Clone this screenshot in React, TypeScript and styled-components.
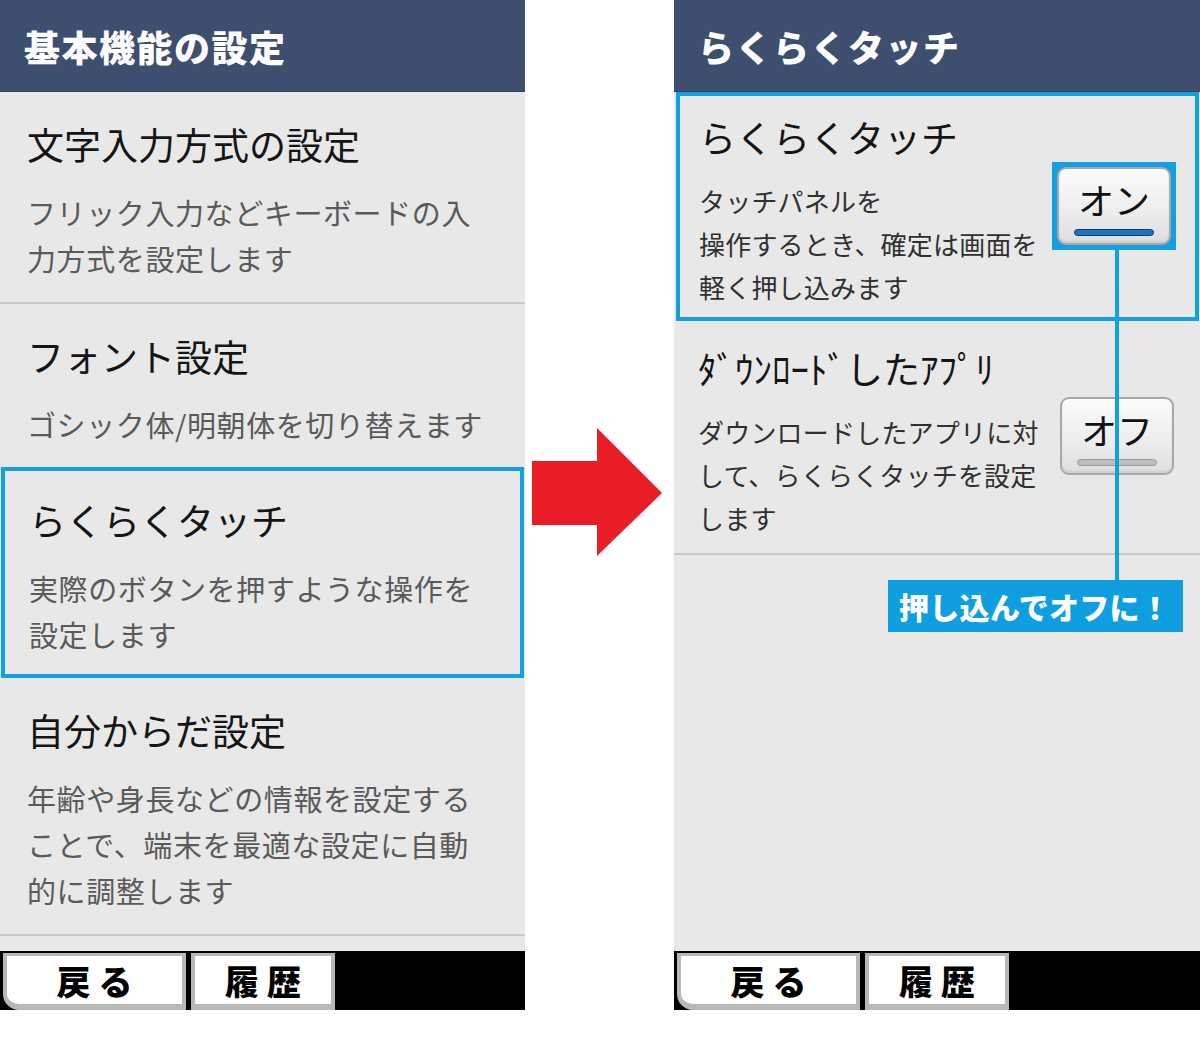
import React from 'react';
import styled, { createGlobalStyle } from 'styled-components';

const GlobalStyle = createGlobalStyle`
  html, body {
    margin: 0;
    padding: 0;
    background: #ffffff;
  }
  * {
    box-sizing: border-box;
  }
  body {
    font-family: "Noto Sans CJK JP", "Noto Sans", sans-serif;
  }
`;

const Page = styled.div`
  width: 1200px;
  height: 1051px;
  display: flex;
  align-items: flex-start;
  background: #ffffff;
`;

const Panel = styled.section<{ $width: number }>`
  position: relative;
  width: ${(p) => p.$width}px;
  height: 1010px;
  display: flex;
  flex-direction: column;
  background: #e8e8e8;
`;

const Header = styled.header`
  height: 92px;
  flex-shrink: 0;
  display: flex;
  align-items: center;
  padding-left: 24px;
  background: #3d4e6f;
  border-bottom: 1px solid #34425f;
  color: #ffffff;
  font-size: 36px;
  font-weight: 900;
  letter-spacing: 1.5px;
`;

const List = styled.div`
  flex: 1;
  display: flex;
  flex-direction: column;
`;

const LeftItem = styled.div<{ $active?: boolean }>`
  padding: ${(p) => (p.$active ? '24px 20px 17px 24px' : '27px 20px 21px 27px')};
  border: ${(p) => (p.$active ? '4px solid #12a0e2' : 'none')};
  border-bottom: ${(p) => (p.$active ? '4px solid #12a0e2' : '2px solid #c9c9c9')};
  margin: ${(p) => (p.$active ? '-3px 1px 0 1px' : '0')};
`;

const Title = styled.div`
  font-size: 37px;
  line-height: 50px;
  color: #151515;
  white-space: nowrap;
`;

const LeftDesc = styled.div`
  margin-top: 20px;
  font-size: 29px;
  line-height: 46px;
  letter-spacing: 0.6px;
  color: #5a5a5a;
  white-space: nowrap;
`;

const RightItem = styled.div<{ $active?: boolean }>`
  padding: ${(p) => (p.$active ? '16px 19px 9px 19px' : '22px 26px 14px 24px')};
  border: ${(p) => (p.$active ? '4px solid #12a0e2' : 'none')};
  border-bottom: ${(p) => (p.$active ? '4px solid #12a0e2' : '2px solid #c9c9c9')};
  margin: ${(p) => (p.$active ? '0 1px 0 2px' : '0')};
`;

const Row = styled.div`
  margin-top: 17px;
  display: flex;
  align-items: flex-start;
  justify-content: space-between;
`;

const RightDesc = styled.div`
  font-size: 26px;
  line-height: 43px;
  letter-spacing: 0.2px;
  color: #303030;
  white-space: nowrap;
`;

const Highlight = styled.div`
  margin-top: -17px;
  padding: 1px;
  border: 4px solid #12a0e2;
  background: #12a0e2;
`;

const ToggleWrap = styled.div`
  margin-top: -13px;
`;

const Toggle = styled.div`
  width: 114px;
  height: 78px;
  display: flex;
  flex-direction: column;
  align-items: center;
  padding-top: 9px;
  border: 2px solid #a8a8a8;
  border-radius: 9px;
  background: linear-gradient(#fbfbfb, #ececec 60%, #dedede);
  box-shadow: inset 0 -2px 2px rgba(0, 0, 0, 0.08);
`;

const ToggleLabel = styled.span`
  font-size: 36px;
  line-height: 42px;
  color: #111111;
`;

const ToggleBar = styled.span<{ $on?: boolean }>`
  margin-top: 9px;
  width: 80px;
  height: 7px;
  border-radius: 4px;
  background: ${(p) => (p.$on ? '#1c74c0' : '#bdbdbd')};
  border: 1px solid ${(p) => (p.$on ? '#0c3d70' : '#9b9b9b')};
`;

const BottomBar = styled.nav`
  height: 59px;
  flex-shrink: 0;
  display: flex;
  gap: 5px;
  padding: 2px 0 0 3px;
  background: #000000;
`;

const BarButton = styled.div<{ $width: number; $rounded?: boolean }>`
  width: ${(p) => p.$width}px;
  height: 57px;
  display: flex;
  align-items: center;
  justify-content: center;
  background: #ffffff;
  border: 4px solid #b8b8b8;
  border-top-width: 3px;
  border-bottom-width: 6px;
  border-bottom-left-radius: ${(p) => (p.$rounded ? '16px' : '0')};
  font-size: 34px;
  font-weight: 900;
  letter-spacing: 8px;
  padding-left: 8px;
  color: #000000;
`;

const ArrowColumn = styled.div`
  width: 149px;
  flex-shrink: 0;
  padding: 428px 0 0 7px;
`;

const Connector = styled.div`
  position: absolute;
  left: 441px;
  top: 248px;
  width: 4px;
  height: 333px;
  background: #12a0e2;
`;

const Callout = styled.div`
  position: absolute;
  left: 214px;
  top: 580px;
  width: 295px;
  height: 52px;
  display: flex;
  align-items: center;
  padding-left: 11px;
  background: #0f9fe0;
  color: #ffffff;
  font-size: 30px;
  font-weight: 900;
  letter-spacing: 0.3px;
  white-space: nowrap;
`;

const leftItems = [
  { title: '文字入力方式の設定', desc: ['フリック入力などキーボードの入', '力方式を設定します'] },
  { title: 'フォント設定', desc: ['ゴシック体/明朝体を切り替えます'] },
  { title: 'らくらくタッチ', desc: ['実際のボタンを押すような操作を', '設定します'], active: true },
  { title: '自分からだ設定', desc: ['年齢や身長などの情報を設定する', 'ことで、端末を最適な設定に自動', '的に調整します'] },
];

const Lines = ({ lines }: { lines: string[] }) => (
  <>
    {lines.map((l, i) => (
      <div key={i}>{l}</div>
    ))}
  </>
);

const Bar = () => (
  <BottomBar>
    <BarButton $width={183} $rounded>戻る</BarButton>
    <BarButton $width={144}>履歴</BarButton>
  </BottomBar>
);

const App = () => {
  return (
    <>
      <GlobalStyle />
      <Page>
        <Panel $width={525}>
          <Header>基本機能の設定</Header>
          <List>
            {leftItems.map((item) => (
              <LeftItem key={item.title} $active={item.active}>
                <Title>{item.title}</Title>
                <LeftDesc>
                  <Lines lines={item.desc} />
                </LeftDesc>
              </LeftItem>
            ))}
          </List>
          <Bar />
        </Panel>

        <ArrowColumn>
          <svg width="130" height="128" viewBox="0 0 130 128">
            <polygon points="0,33 65,33 65,0 130,65 65,128 65,97 0,97" fill="#e81d25" />
          </svg>
        </ArrowColumn>

        <Panel $width={526}>
          <Header>らくらくタッチ</Header>
          <List>
            <RightItem $active>
              <Title>らくらくタッチ</Title>
              <Row>
                <RightDesc>
                  <Lines lines={['タッチパネルを', '操作するとき、確定は画面を', '軽く押し込みます']} />
                </RightDesc>
                <Highlight>
                  <Toggle>
                    <ToggleLabel>オン</ToggleLabel>
                    <ToggleBar $on />
                  </Toggle>
                </Highlight>
              </Row>
            </RightItem>
            <RightItem>
              <Title>ﾀﾞｳﾝﾛｰﾄﾞしたｱﾌﾟﾘ</Title>
              <Row>
                <RightDesc>
                  <Lines lines={['ダウンロードしたアプリに対', 'して、らくらくタッチを設定', 'します']} />
                </RightDesc>
                <ToggleWrap>
                  <Toggle>
                    <ToggleLabel>オフ</ToggleLabel>
                    <ToggleBar />
                  </Toggle>
                </ToggleWrap>
              </Row>
            </RightItem>
          </List>
          <Bar />
          <Connector />
          <Callout>押し込んでオフに！</Callout>
        </Panel>
      </Page>
    </>
  );
};

export default App;
